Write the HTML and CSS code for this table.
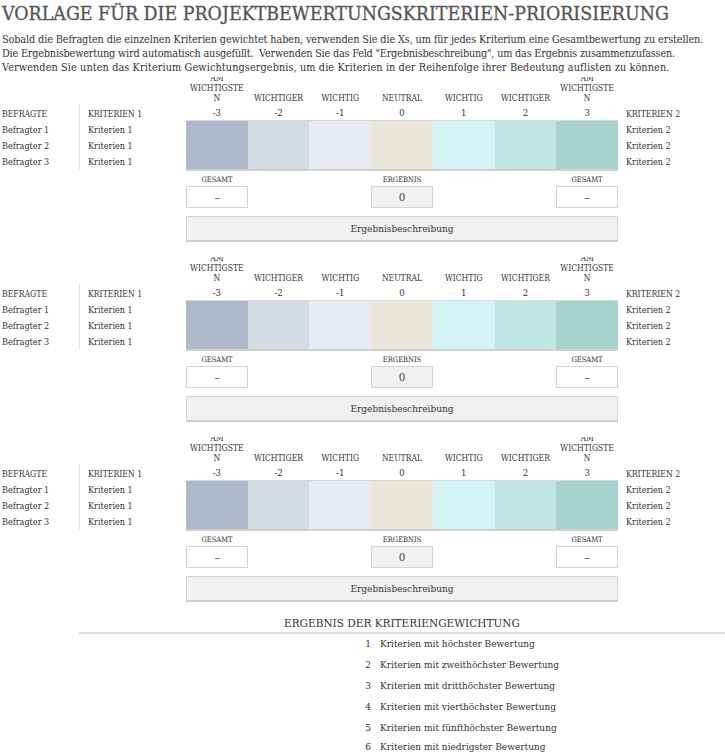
FILE: index.html
```html
<!DOCTYPE html>
<html lang="de">
<head>
<meta charset="utf-8">
<link rel="stylesheet" href="styles.css">
</head>
<body>
<div class="page">
  <h1 class="title">VORLAGE FÜR DIE PROJEKTBEWERTUNGSKRITERIEN-PRIORISIERUNG</h1>
  <p class="intro"><span class="line l1">Sobald die Befragten die einzelnen Kriterien gewichtet haben, verwenden Sie die Xs, um für jedes Kriterium eine Gesamtbewertung zu erstellen.</span><span class="line l2">Die Ergebnisbewertung wird automatisch ausgefüllt.&nbsp; Verwenden Sie das Feld "Ergebnisbeschreibung", um das Ergebnis zusammenzufassen.</span><span class="line l3">Verwenden Sie unten das Kriterium Gewichtungsergebnis, um die Kriterien in der Reihenfolge ihrer Bedeutung auflisten zu können.</span></p>

  <section class="block">
    <div class="col col-resp">
      <div class="spacer"></div>
      <div class="cell head">BEFRAGTE</div>
      <div class="cell">Befragter 1</div>
      <div class="cell">Befragter 2</div>
      <div class="cell">Befragter 3</div>
    </div>
    <div class="col col-k1">
      <div class="spacer"></div>
      <div class="rule">
        <div class="cell head">KRITERIEN 1</div>
        <div class="cell">Kriterien 1</div>
        <div class="cell">Kriterien 1</div>
        <div class="cell">Kriterien 1</div>
      </div>
    </div>
    <div class="main">
      <div class="scale">
        <div class="lbl"><span>AM<br>WICHTIGSTE<br>N</span></div>
        <div class="lbl"><span>WICHTIGER</span></div>
        <div class="lbl"><span>WICHTIG</span></div>
        <div class="lbl"><span>NEUTRAL</span></div>
        <div class="lbl"><span>WICHTIG</span></div>
        <div class="lbl"><span>WICHTIGER</span></div>
        <div class="lbl"><span>AM<br>WICHTIGSTE<br>N</span></div>
        <div class="num">-3</div><div class="num">-2</div><div class="num">-1</div><div class="num">0</div><div class="num">1</div><div class="num">2</div><div class="num">3</div>
        <div class="band b1"></div><div class="band b2"></div><div class="band b3"></div><div class="band b4"></div><div class="band b5"></div><div class="band b6"></div><div class="band b7"></div>
      </div>
      <div class="totals">
        <div class="tot"><div class="tlabel">GESAMT</div><div class="box">–</div></div>
        <div class="tot"><div class="tlabel">ERGEBNIS</div><div class="box result">0</div></div>
        <div class="tot"><div class="tlabel">GESAMT</div><div class="box">–</div></div>
      </div>
      <div class="desc">Ergebnisbeschreibung</div>
    </div>
    <div class="col col-k2">
      <div class="spacer"></div>
      <div class="cell head">KRITERIEN 2</div>
      <div class="cell">Kriterien 2</div>
      <div class="cell">Kriterien 2</div>
      <div class="cell">Kriterien 2</div>
    </div>
  </section>

  <section class="block">
    <div class="col col-resp">
      <div class="spacer"></div>
      <div class="cell head">BEFRAGTE</div>
      <div class="cell">Befragter 1</div>
      <div class="cell">Befragter 2</div>
      <div class="cell">Befragter 3</div>
    </div>
    <div class="col col-k1">
      <div class="spacer"></div>
      <div class="rule">
        <div class="cell head">KRITERIEN 1</div>
        <div class="cell">Kriterien 1</div>
        <div class="cell">Kriterien 1</div>
        <div class="cell">Kriterien 1</div>
      </div>
    </div>
    <div class="main">
      <div class="scale">
        <div class="lbl"><span>AM<br>WICHTIGSTE<br>N</span></div>
        <div class="lbl"><span>WICHTIGER</span></div>
        <div class="lbl"><span>WICHTIG</span></div>
        <div class="lbl"><span>NEUTRAL</span></div>
        <div class="lbl"><span>WICHTIG</span></div>
        <div class="lbl"><span>WICHTIGER</span></div>
        <div class="lbl"><span>AM<br>WICHTIGSTE<br>N</span></div>
        <div class="num">-3</div><div class="num">-2</div><div class="num">-1</div><div class="num">0</div><div class="num">1</div><div class="num">2</div><div class="num">3</div>
        <div class="band b1"></div><div class="band b2"></div><div class="band b3"></div><div class="band b4"></div><div class="band b5"></div><div class="band b6"></div><div class="band b7"></div>
      </div>
      <div class="totals">
        <div class="tot"><div class="tlabel">GESAMT</div><div class="box">–</div></div>
        <div class="tot"><div class="tlabel">ERGEBNIS</div><div class="box result">0</div></div>
        <div class="tot"><div class="tlabel">GESAMT</div><div class="box">–</div></div>
      </div>
      <div class="desc">Ergebnisbeschreibung</div>
    </div>
    <div class="col col-k2">
      <div class="spacer"></div>
      <div class="cell head">KRITERIEN 2</div>
      <div class="cell">Kriterien 2</div>
      <div class="cell">Kriterien 2</div>
      <div class="cell">Kriterien 2</div>
    </div>
  </section>

  <section class="block">
    <div class="col col-resp">
      <div class="spacer"></div>
      <div class="cell head">BEFRAGTE</div>
      <div class="cell">Befragter 1</div>
      <div class="cell">Befragter 2</div>
      <div class="cell">Befragter 3</div>
    </div>
    <div class="col col-k1">
      <div class="spacer"></div>
      <div class="rule">
        <div class="cell head">KRITERIEN 1</div>
        <div class="cell">Kriterien 1</div>
        <div class="cell">Kriterien 1</div>
        <div class="cell">Kriterien 1</div>
      </div>
    </div>
    <div class="main">
      <div class="scale">
        <div class="lbl"><span>AM<br>WICHTIGSTE<br>N</span></div>
        <div class="lbl"><span>WICHTIGER</span></div>
        <div class="lbl"><span>WICHTIG</span></div>
        <div class="lbl"><span>NEUTRAL</span></div>
        <div class="lbl"><span>WICHTIG</span></div>
        <div class="lbl"><span>WICHTIGER</span></div>
        <div class="lbl"><span>AM<br>WICHTIGSTE<br>N</span></div>
        <div class="num">-3</div><div class="num">-2</div><div class="num">-1</div><div class="num">0</div><div class="num">1</div><div class="num">2</div><div class="num">3</div>
        <div class="band b1"></div><div class="band b2"></div><div class="band b3"></div><div class="band b4"></div><div class="band b5"></div><div class="band b6"></div><div class="band b7"></div>
      </div>
      <div class="totals">
        <div class="tot"><div class="tlabel">GESAMT</div><div class="box">–</div></div>
        <div class="tot"><div class="tlabel">ERGEBNIS</div><div class="box result">0</div></div>
        <div class="tot"><div class="tlabel">GESAMT</div><div class="box">–</div></div>
      </div>
      <div class="desc">Ergebnisbeschreibung</div>
    </div>
    <div class="col col-k2">
      <div class="spacer"></div>
      <div class="cell head">KRITERIEN 2</div>
      <div class="cell">Kriterien 2</div>
      <div class="cell">Kriterien 2</div>
      <div class="cell">Kriterien 2</div>
    </div>
  </section>

  <section class="summary">
    <h2 class="sum-title">ERGEBNIS DER KRITERIENGEWICHTUNG</h2>
    <ol class="sum-list">
      <li><span class="n">1</span><span>Kriterien mit höchster Bewertung</span></li>
      <li><span class="n">2</span><span>Kriterien mit zweithöchster Bewertung</span></li>
      <li><span class="n">3</span><span>Kriterien mit dritthöchster Bewertung</span></li>
      <li><span class="n">4</span><span>Kriterien mit vierthöchster Bewertung</span></li>
      <li><span class="n">5</span><span>Kriterien mit fünfthöchster Bewertung</span></li>
      <li class="last"><span class="n">6</span><span>Kriterien mit niedrigster Bewertung</span></li>
    </ol>
  </section>
</div>
</body>
</html>
```

FILE: styles.css
```css
* { box-sizing: border-box; }
html, body { margin: 0; padding: 0; background: #fff; }
body {
  font-family: "DejaVu Serif", "Liberation Serif", serif;
  font-stretch: condensed;
  color: #333;
}
.page { padding: 0 0 0 2px; width: 725px; height: 752px; overflow: hidden; }

.title {
  margin: 0;
  height: 28px;
  line-height: 28px;
  font-size: 19.4px;
  font-weight: normal;
  color: #555;
  white-space: nowrap;
  -webkit-text-stroke: 0.3px #555;
}
.intro {
  margin: 0;
  padding-top: 5px;
  font-size: 10.8px;
  line-height: 14px;
  height: 46px;
  white-space: nowrap;
}
.intro .line { display: block; }
.intro .l1 { letter-spacing: -0.12px; }
.intro .l2 { letter-spacing: -0.2px; }
.intro .l3 { letter-spacing: 0.1px; }

.block { display: flex; height: 180px; }
.col { display: flex; flex-direction: column; }
.spacer { height: 32px; flex: none; }
.cell { height: 16px; line-height: 16px; font-size: 9px; white-space: nowrap; }
.cell.head { font-size: 8.6px; }
.col-resp { width: 77px; }
.col-k1 { width: 107px; }
.col-k1 .rule { border-left: 1px solid #e2e2e2; padding-left: 8px; height: 66px; margin-top: -2px; padding-top: 2px; }
.col-k2 { padding-left: 8px; }

.main { width: 432px; display: flex; flex-direction: column; }
.scale {
  display: grid;
  grid-template-columns: repeat(7, 1fr);
  grid-template-rows: 29px 14px 51px;
  padding-top: 3px;
}
.lbl {
  height: 29px;
  overflow: hidden;
  display: flex;
  align-items: flex-end;
  justify-content: center;
  padding-bottom: 3px;
  text-align: center;
  font-size: 8.5px;
  line-height: 10px;
}
.num { text-align: center; font-size: 9.5px; line-height: 14px; }
.band { border-top: 1px solid #d8d8d8; border-bottom: 2px solid #d0d0d0; }
.b1 { background: #adb9c9; }
.b2 { background: #d5dbe5; }
.b3 { background: #e8ebf3; }
.b4 { background: #ebe7da; }
.b5 { background: #d4f3f6; }
.b6 { background: #c0e5e2; }
.b7 { background: #a8d3cd; }

.totals { display: flex; justify-content: space-between; }
.tot { width: 62px; display: flex; flex-direction: column; align-items: center; }
.tlabel { height: 15px; line-height: 17px; font-size: 7.5px; }
.box {
  width: 62px;
  height: 22px;
  line-height: 20px;
  border: 1px solid #d4d4d4;
  text-align: center;
  font-size: 11.5px;
  background: #fff;
  color: #444;
}
.box.result { background: #f1f1f1; }
.desc {
  margin-top: 8px;
  height: 26px;
  line-height: 24px;
  background: #f1f1f1;
  border: 1px solid #d4d4d4;
  border-bottom: 2px solid #cfcfcf;
  text-align: center;
  font-size: 10px;
}

.summary { margin-left: 77px; }
.sum-title {
  margin: 0;
  font-weight: normal;
  font-size: 11.7px;
  line-height: 18px;
  text-align: center;
  border-bottom: 2px solid #e0e0e0;
}
.sum-list { list-style: none; margin: 0; padding: 0 0 0 280px; }
.sum-list li { display: flex; height: 21px; line-height: 19px; font-size: 10px; white-space: nowrap; }
.sum-list li.last { height: 18px; line-height: 16px; }
.sum-list .n { width: 12px; text-align: right; margin-right: 9px; }
```
